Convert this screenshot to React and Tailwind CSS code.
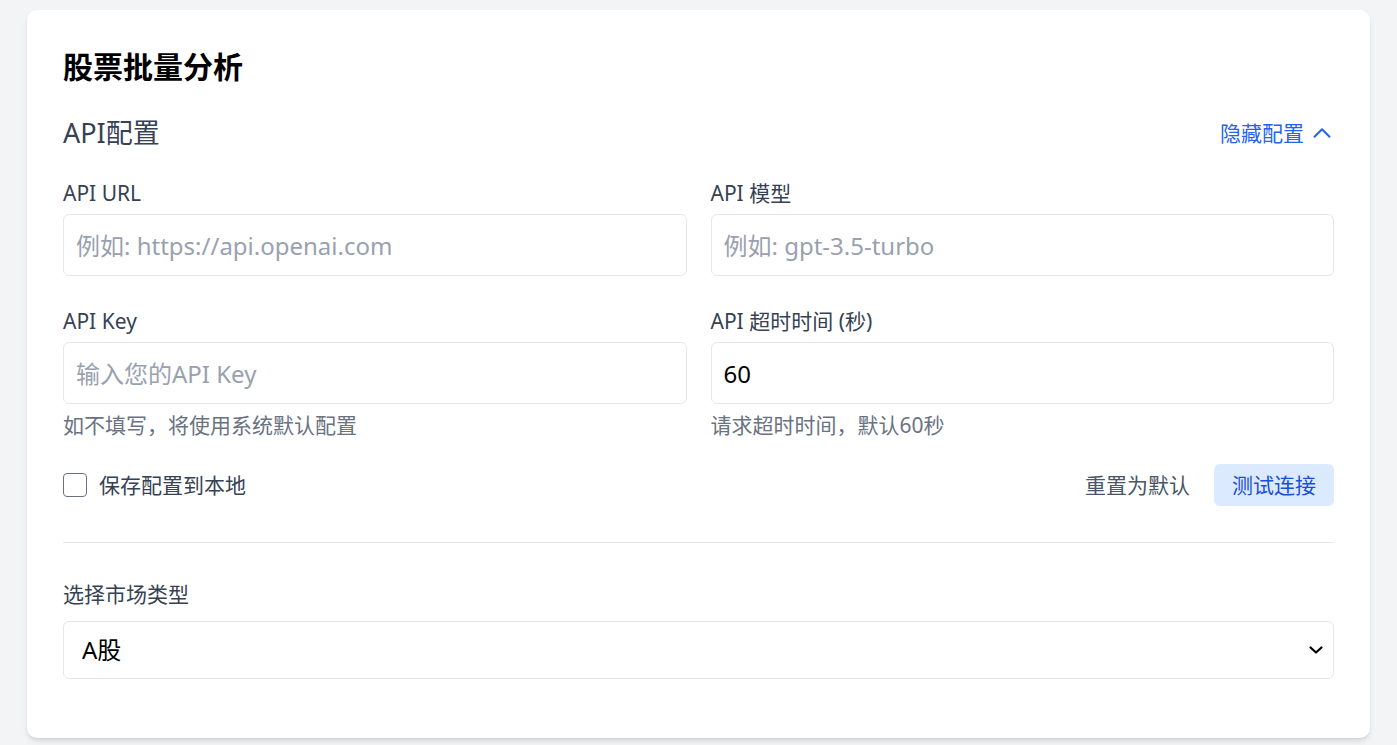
import { useState } from 'react';

const FONT = { fontFamily: '"Noto Sans", "Noto Sans CJK SC", sans-serif' };

const Field = ({ label, placeholder, value, hint, onChange }) => (
  <div>
    <label className="block text-[21px] leading-[30px] text-gray-700 mb-[6px]">{label}</label>
    <input
      type="text"
      value={value}
      onChange={onChange}
      placeholder={placeholder}
      className="block w-full h-[62px] px-3 border border-gray-200 rounded-[6px] text-[24px] text-black placeholder:text-gray-400 outline-none focus:border-blue-400"
    />
    {hint && <p className="mt-[6px] text-[21px] leading-[30px] text-gray-500">{hint}</p>}
  </div>
);

const App = () => {
  const [showConfig, setShowConfig] = useState(true);
  const [apiUrl, setApiUrl] = useState('');
  const [apiModel, setApiModel] = useState('');
  const [apiKey, setApiKey] = useState('');
  const [timeout, setTimeoutValue] = useState('60');
  const [saveLocal, setSaveLocal] = useState(false);
  const [market, setMarket] = useState('A');

  return (
    <div className="min-h-screen bg-[#f3f4f6] px-[27px] pt-[10px]" style={FONT}>
      <div className="bg-white rounded-[10px] shadow-md px-9 pt-9 pb-[59px]">
        <h1 className="text-[30px] leading-[42px] font-bold text-black mb-6">股票批量分析</h1>

        <div className="flex items-center justify-between mb-6">
          <h2 className="text-[27px] leading-[42px] text-gray-700">API配置</h2>
          <button
            onClick={() => setShowConfig(!showConfig)}
            className="flex items-center gap-[6px] text-[21px] leading-[30px] text-[#2563eb]"
          >
            {showConfig ? '隐藏配置' : '显示配置'}
            <svg className="w-6 h-6" viewBox="0 0 24 24" fill="none" stroke="currentColor" strokeWidth="2" strokeLinecap="round" strokeLinejoin="round">
              <path d={showConfig ? 'M4.5 15.75l7.5-7.5 7.5 7.5' : 'M19.5 8.25l-7.5 7.5-7.5-7.5'} />
            </svg>
          </button>
        </div>

        {showConfig && (
          <>
            <div className="grid grid-cols-2 gap-x-6 gap-y-[30px]">
              <Field label="API URL" placeholder="例如: https://api.openai.com" value={apiUrl} onChange={(e) => setApiUrl(e.target.value)} />
              <Field label="API 模型" placeholder="例如: gpt-3.5-turbo" value={apiModel} onChange={(e) => setApiModel(e.target.value)} />
              <Field label="API Key" placeholder="输入您的API Key" value={apiKey} hint="如不填写，将使用系统默认配置" onChange={(e) => setApiKey(e.target.value)} />
              <Field label="API 超时时间 (秒)" value={timeout} hint="请求超时时间，默认60秒" onChange={(e) => setTimeoutValue(e.target.value)} />
            </div>

            <div className="mt-[24px] flex items-center justify-between h-[42px]">
              <label className="flex items-center gap-3 cursor-pointer">
                <input
                  type="checkbox"
                  checked={saveLocal}
                  onChange={(e) => setSaveLocal(e.target.checked)}
                  className="appearance-none w-6 h-6 rounded-[4px] border-[1.5px] border-gray-500 bg-white checked:bg-blue-600 checked:border-blue-600"
                />
                <span className="text-[21px] leading-[30px] text-gray-700">保存配置到本地</span>
              </label>
              <div className="flex items-center gap-[6px]">
                <button className="px-[18px] h-[42px] rounded-[6px] text-[21px] leading-[30px] text-gray-600 hover:bg-gray-100">
                  重置为默认
                </button>
                <button className="px-[18px] h-[42px] rounded-[6px] text-[21px] leading-[30px] text-[#1d4ed8] bg-[#dbeafe] hover:bg-blue-200">
                  测试连接
                </button>
              </div>
            </div>
          </>
        )}

        <div className="mt-9 border-t border-gray-200 pt-9">
          <label className="block text-[21px] leading-[30px] text-gray-700 mb-3">选择市场类型</label>
          <div className="relative">
            <select
              value={market}
              onChange={(e) => setMarket(e.target.value)}
              className="block w-full h-[58px] appearance-none px-[18px] border border-gray-200 rounded-[6px] bg-white text-[24px] text-black outline-none"
            >
              <option value="A">A股</option>
              <option value="HK">港股</option>
              <option value="US">美股</option>
            </select>
            <svg className="pointer-events-none absolute right-[10px] top-1/2 -translate-y-1/2 w-4 h-4" viewBox="0 0 16 16" fill="none" stroke="black" strokeWidth="2.2" strokeLinecap="round" strokeLinejoin="round">
              <path d="M2.5 5.5l5.5 5 5.5-5" />
            </svg>
          </div>
        </div>
      </div>
    </div>
  );
};

export default App;
